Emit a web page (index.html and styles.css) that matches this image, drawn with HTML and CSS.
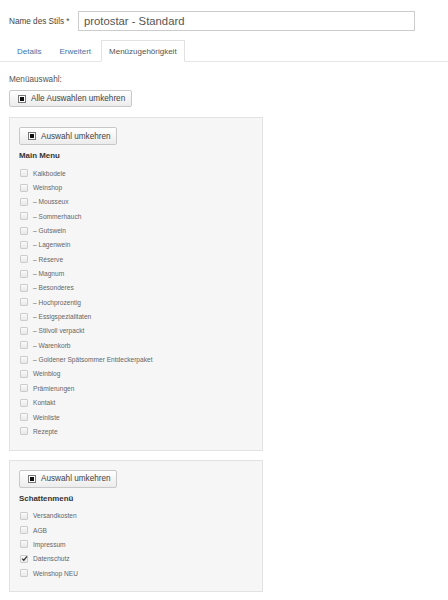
FILE: index.html
```html
<!DOCTYPE html>
<html lang="de">
<head>
    <meta charset="UTF-8">
    <title>Stil bearbeiten</title>
    <link rel="stylesheet" href="styles.css">
</head>
<body>
    <div class="page">
        <div class="field">
            <label class="field-label">Name des Stils *</label>
            <div class="field-input">protostar - Standard</div>
        </div>

        <ul class="tabs">
            <li><a>Details</a></li>
            <li><a>Erweitert</a></li>
            <li class="active"><a>Menüzugehörigkeit</a></li>
        </ul>

        <div class="section-label">Menüauswahl:</div>
        <button class="btn"><span class="icon"></span>Alle Auswahlen umkehren</button>

        <div class="well">
            <button class="btn"><span class="icon"></span>Auswahl umkehren</button>
            <h5>Main Menu</h5>
            <ul class="menu-list">
                <li><span class="check"></span>Kalkbodele</li>
                <li><span class="check"></span>Weinshop</li>
                <li><span class="check"></span>– Mousseux</li>
                <li><span class="check"></span>– Sommerhauch</li>
                <li><span class="check"></span>– Gutswein</li>
                <li><span class="check"></span>– Lagenwein</li>
                <li><span class="check"></span>– Réserve</li>
                <li><span class="check"></span>– Magnum</li>
                <li><span class="check"></span>– Besonderes</li>
                <li><span class="check"></span>– Hochprozentig</li>
                <li><span class="check"></span>– Essigspezialitaten</li>
                <li><span class="check"></span>– Stilvoll verpackt</li>
                <li><span class="check"></span>– Warenkorb</li>
                <li><span class="check"></span>– Goldener Spätsommer Entdeckerpaket</li>
                <li><span class="check"></span>Weinblog</li>
                <li><span class="check"></span>Prämierungen</li>
                <li><span class="check"></span>Kontakt</li>
                <li><span class="check"></span>Weinliste</li>
                <li><span class="check"></span>Rezepte</li>
            </ul>
        </div>

        <div class="well">
            <button class="btn"><span class="icon"></span>Auswahl umkehren</button>
            <h5>Schattenmenü</h5>
            <ul class="menu-list">
                <li><span class="check"></span>Versandkosten</li>
                <li><span class="check"></span>AGB</li>
                <li><span class="check"></span>Impressum</li>
                <li><span class="check checked"><svg viewBox="0 0 8 8" width="7" height="7"><path d="M1.3 4.2 L3.2 6 L6.8 1.6" fill="none" stroke="#333" stroke-width="1.4"/></svg></span>Datenschutz</li>
                <li><span class="check"></span>Weinshop NEU</li>
            </ul>
        </div>
    </div>
</body>
</html>
```

FILE: styles.css
```css
body {
    margin: 0;
    background: #ffffff;
    font-family: 'Liberation Sans', Arial, sans-serif;
    font-size: 8.2px;
    color: #555;
}

.page {
    padding: 11px 9px 0 9px;
}

/* Name field */
.field {
    display: flex;
    align-items: center;
}

.field-label {
    width: 69px;
    color: #444;
}

.field-input {
    width: 330px;
    height: 18px;
    line-height: 18px;
    padding-left: 5px;
    border: 1px solid #ccc;
    font-size: 11.3px;
    color: #555;
}

/* Tabs */
.tabs {
    list-style: none;
    display: flex;
    margin: 9px -9px 0 -9px;
    padding: 0 0 0 9px;
    border-bottom: 1px solid #e6e6e6;
}

.tabs li {
    margin-right: 2px;
    margin-bottom: -1px;
}

.tabs a {
    display: block;
    padding: 0 7px;
    height: 20px;
    line-height: 21px;
    font-size: 8px;
    color: #4473a8;
    border: 1px solid transparent;
    border-bottom: none;
}

.tabs .active a {
    color: #555;
    background: #fff;
    border-color: #e2e2e2;
    border-bottom: 1px solid #fff;
}

.section-label {
    margin-top: 12px;
    line-height: 11px;
}

/* Buttons */
.btn {
    display: flex;
    align-items: center;
    margin-top: 5px;
    height: 17px;
    padding: 0 6px 0 9px;
    font-family: inherit;
    font-size: 8.2px;
    color: #444;
    background: linear-gradient(#ffffff, #ececec);
    border: 1px solid #c8c8c8;
    border-radius: 2px;
}

.icon {
    width: 4px;
    height: 4px;
    margin-right: 6px;
    background: #111;
    border: 1px solid #fff;
    box-shadow: 0 0 0 1px #777;
}

/* Panels */
.well {
    width: 234px;
    margin-top: 10px;
    padding: 9px 9px 11px 9px;
    background: #f6f6f6;
    border: 1px solid #e2e2e2;
}

.well + .well {
    margin-top: 9px;
}

.well .btn {
    margin-top: 0;
    height: 18px;
    padding: 0 5px 0 9px;
    font-size: 8.2px;
}

.well h5 {
    margin: 5px 0 5px 0;
    font-size: 7.9px;
    line-height: 11px;
    color: #333;
}

.menu-list {
    list-style: none;
    margin: 0;
    padding: 0;
}

.menu-list li {
    display: flex;
    align-items: center;
    height: 14.35px;
    font-size: 6.6px;
    color: #666;
}

.check {
    display: flex;
    align-items: center;
    justify-content: center;
    width: 6px;
    height: 6px;
    margin: 0 5px 0 1px;
    border: 1px solid #cccccc;
    border-radius: 1px;
    background: linear-gradient(#fafafa, #e8e8e8);
}

.check svg {
    flex: none;
}
```
